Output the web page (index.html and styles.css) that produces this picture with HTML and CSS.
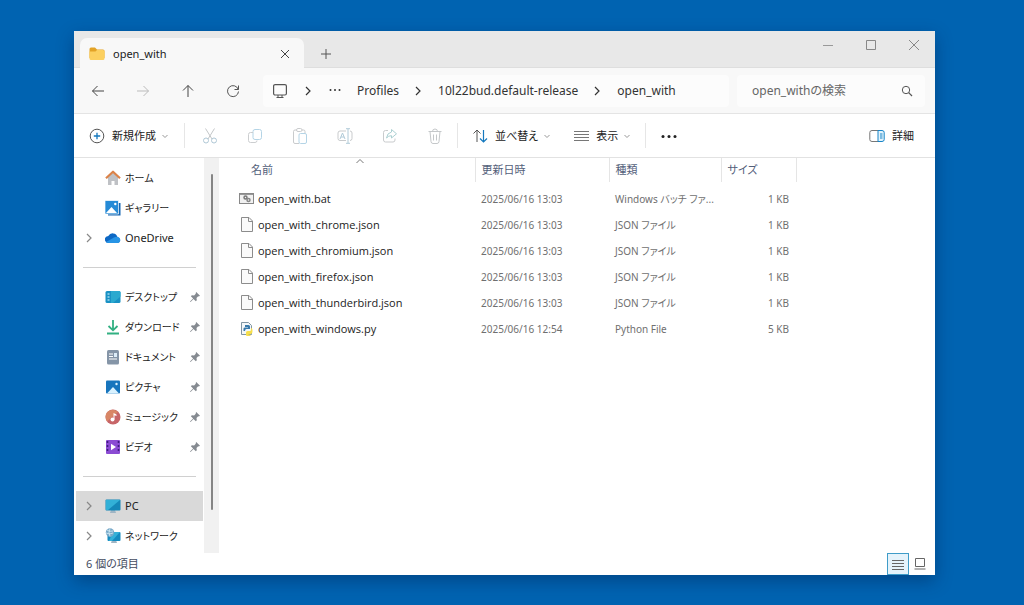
FILE: index.html
```html
<!DOCTYPE html>
<html lang="ja">
<head>
<meta charset="utf-8">
<title>open_with</title>
<link rel="stylesheet" href="styles.css">
</head>
<body>
<svg class="defs" aria-hidden="true">
  <symbol id="chev" viewBox="0 0 10 10"><path d="M3 1l4 4-4 4" fill="none" stroke="currentColor" stroke-width="1.2"/></symbol>
  <symbol id="down" viewBox="0 0 8 8"><path d="M1.500 3L4 5.500 6.500 3" fill="none" stroke="currentColor"/></symbol>
  <symbol id="pin" viewBox="0 0 12 12"><path d="M7.200 1l3.800 3.800-1.200.6-.6-.1-1.700 1.800.3 2.200-1 .9-2.300-2.300L1.600 11 1 10.400l3.100-2.900L1.900 5.200l.9-.9 2.300.2 1.700-1.700-.1-.7z" fill="#858a90"/></symbol>
  <symbol id="file" viewBox="0 0 16 16"><path d="M2.500 .5h7.500l3.500 3.500v10.500h-11z" fill="#fafafa" stroke="#8c8c8c"/><path d="M9.500 .5v4h4" fill="none" stroke="#8c8c8c"/></symbol>
</svg>
<main class="window">
  <header class="tabs">
    <div class="tab">
      <svg class="i16" viewBox="0 0 16 16"><path d="M.5 3q0-1.500 1.500-1.500h4l2 2h6q1.500 0 1.500 1.500v7H.5z" fill="#e3a326"/><path d="M.5 5.500h6l1.500-1.500h6q1.500 0 1.500 1.500v7q0 1.500-1.500 1.500H2q-1.500 0-1.500-1.500z" fill="#fcd060"/></svg>
      <span class="tab-title">open_with</span>
      <button class="plain" aria-label="タブを閉じる"><svg class="i10" viewBox="0 0 10 10"><path d="M1 1l8 8M9 1l-8 8" stroke="#444"/></svg></button>
    </div>
    <button class="plain new-tab" aria-label="新しいタブ"><svg class="i10" viewBox="0 0 10 10"><path d="M5 0v10M0 5h10" stroke="#555"/></svg></button>
    <div class="controls">
      <button class="plain" aria-label="最小化"><svg class="i10" viewBox="0 0 10 10"><path d="M0 5.500h10" stroke="#999"/></svg></button>
      <button class="plain" aria-label="最大化"><svg class="i10" viewBox="0 0 10 10"><path d="M.5 .5h9v9h-9z" fill="none" stroke="#888"/></svg></button>
      <button class="plain" aria-label="閉じる"><svg class="i10" viewBox="0 0 10 10"><path d="M0 0l10 10M10 0L0 10" stroke="#888"/></svg></button>
    </div>
  </header>

  <nav class="navbar">
    <div class="nav-buttons">
      <button class="plain" aria-label="戻る"><svg class="i14" viewBox="0 0 14 14"><path d="M13 7H1.500M6.500 2l-5 5 5 5" fill="none" stroke="#444"/></svg></button>
      <button class="plain" aria-label="進む"><svg class="i14" viewBox="0 0 14 14"><path d="M1 7h11.500M7.500 2l5 5-5 5" fill="none" stroke="#bbb"/></svg></button>
      <button class="plain" aria-label="上へ"><svg class="i14" viewBox="0 0 14 14"><path d="M7 13V1.500M2 6.500l5-5 5 5" fill="none" stroke="#444"/></svg></button>
      <button class="plain" aria-label="更新"><svg class="i14" viewBox="0 0 14 14"><path d="M12.200 5.300A5.500 5.500 0 1 0 12.500 7.500M12.500 1.500v4h-4" fill="none" stroke="#555"/></svg></button>
    </div>
    <div class="address">
      <svg class="i16" viewBox="0 0 16 16"><rect x="1.600" y="1.600" width="12.800" height="10.400" rx="1.500" fill="none" stroke="#555" stroke-width="1.200"/><path d="M4.500 14.500h7M6 12v2.500M10 12v2.500" fill="none" stroke="#555"/></svg>
      <svg class="i10 c1"><use href="#chev"/></svg>
      <button class="plain dots" aria-label="その他の場所"><svg class="i12" viewBox="0 0 12 12"><g fill="#333"><circle cx="1.500" cy="5" r="1"/><circle cx="6" cy="5" r="1"/><circle cx="10.500" cy="5" r="1"/></g></svg></button>
      <a href="#profiles">Profiles</a>
      <svg class="i10 c2"><use href="#chev"/></svg>
      <a href="#release">10l22bud.default-release</a>
      <svg class="i10 c2"><use href="#chev"/></svg>
      <a href="#open_with">open_with</a>
    </div>
    <div class="search">
      <input type="text" aria-label="検索" placeholder="open_withの検索">
      <svg class="i12" viewBox="0 0 12 12"><circle cx="5" cy="5" r="3.700" fill="none" stroke="#555"/><path d="M7.700 7.700L11 11" stroke="#555" stroke-width="1.200"/></svg>
    </div>
  </nav>

  <div class="toolbar">
    <button class="plain create"><svg class="i16" viewBox="0 0 16 16"><circle cx="8" cy="8" r="6.800" fill="none" stroke="#555"/><path d="M8 4.800v6.400M4.800 8h6.400" stroke="#1478be" stroke-width="1.300"/></svg><span>新規作成</span><svg class="i8"><use href="#down"/></svg></button>
    <div class="edit">
      <button class="plain" disabled aria-label="切り取り"><svg class="i16" viewBox="0 0 16 16"><path d="M3.500 .5l6.500 10.500M12.500 .5L6 11" stroke="#c3c6c8" fill="none"/><circle cx="4" cy="12.500" r="2.500" fill="none" stroke="#b0c8d6"/><circle cx="12" cy="12.500" r="2.500" fill="none" stroke="#b0c8d6"/></svg></button>
      <button class="plain" disabled aria-label="コピー"><svg class="i16" viewBox="0 0 16 16"><rect x="6" y="1.500" width="8.500" height="10" rx="2" fill="none" stroke="#b4d4e6"/><path d="M6 4.500H3.500q-2 0-2 2v6q0 2 2 2H8q2 0 2-2" fill="none" stroke="#ccced0"/></svg></button>
      <button class="plain" disabled aria-label="貼り付け"><svg class="i16" viewBox="0 0 16 16"><path d="M7 15.500H3q-1.500 0-1.500-1.500V3.500Q1.500 2 3 2h1.500M10 2h1.500Q13 2 13 3.500V5" fill="none" stroke="#c9cbcd"/><rect x="4.500" y=".5" width="5.500" height="3" rx="1.500" fill="none" stroke="#c9cbcd"/><rect x="7" y="5.500" width="7.500" height="10" rx="1.500" fill="none" stroke="#b4d4e6"/></svg></button>
      <button class="plain" disabled aria-label="名前の変更"><svg class="i16" viewBox="0 0 16 16"><path d="M9 3H3Q1 3 1 5v5.500q0 2 2 2h6M13 3q2 0 2 2v5.500q0 2-2 2" fill="none" stroke="#c9cbcd"/><path d="M3 11l2.500-6L8 11M4 9h3M11 1v14M9 .7h4M9 15.300h4" fill="none" stroke="#b0cad8"/></svg></button>
      <button class="plain" disabled aria-label="共有"><svg class="i16" viewBox="0 0 16 16"><path d="M6 2.500H3.500q-2 0-2 2V12q0 2 2 2H11q2 0 2-2v-1.500" fill="none" stroke="#c9cbcd"/><path d="M9.500 1.500l5 4.300-5 4.200V7.700Q6.500 7.500 4.500 10 5 5 9.500 4z" fill="none" stroke="#acd0d2"/></svg></button>
      <button class="plain" disabled aria-label="削除"><svg class="i16" viewBox="0 0 16 16"><path d="M1.500 3.500h13M5.500 3.500q0-2.500 2.500-2.500t2.500 2.500M3 3.500l1 10q.2 2 2 2h4q1.800 0 2-2l1-10M6.500 6.500v6M9.500 6.500v6" fill="none" stroke="#c5c8ca"/></svg></button>
    </div>
    <div class="arrange">
      <button class="plain"><svg class="i16" viewBox="0 0 16 16"><path d="M5 14V2M1.500 5.500L5 2l3.500 3.500" fill="none" stroke="#555"/><path d="M11.500 2v12M8 10.500l3.500 3.500 3.500-3.500" fill="none" stroke="#1478be" stroke-width="1.200"/></svg><span>並べ替え</span><svg class="i8"><use href="#down"/></svg></button>
      <button class="plain"><svg class="i16" viewBox="0 0 16 16"><path d="M1 3.500h15M1 6.500h15M1 9.500h15M1 12.500h15" stroke="#777"/></svg><span>表示</span><svg class="i8"><use href="#down"/></svg></button>
    </div>
    <button class="plain more" aria-label="もっと見る"><svg class="i16" viewBox="0 0 16 16"><g fill="#222"><circle cx="2" cy="8.500" r="1.500"/><circle cx="8" cy="8.500" r="1.500"/><circle cx="14" cy="8.500" r="1.500"/></g></svg></button>
    <button class="plain details"><svg class="i16" viewBox="0 0 16 16"><path d="M9 2.500H3q-2.200 0-2.200 2v7q0 2 2.200 2h6" fill="#fff" stroke="#777"/><path d="M9 2.500h4q2.200 0 2.200 2v7q0 2-2.200 2H9z" fill="#e2f3fc" stroke="#1684c7"/><path d="M11 6h2.500M11 8h2.500M11 10h2.500" stroke="#1684c7"/></svg><span>詳細</span></button>
  </div>

  <div class="content">
    <aside class="side">
      <ul>
        <li><a href="#home"><i></i><svg class="i16" viewBox="0 0 16 16"><path d="M3 7l5-4.500L13 7v8h-3.500v-4h-3v4H3z" fill="#bfc1c5"/><path d="M1 8.200L8 1.700l7 6.500" fill="none" stroke="#db8248" stroke-width="2.200" stroke-linejoin="round"/></svg><span>ホーム</span></a></li>
        <li><a href="#gallery"><i></i><svg class="i16" viewBox="0 0 16 16"><path d="M3 3h12.500v12.500H3z" fill="#1767b3"/><path d="M0 .5h13.500V14H0z" fill="#258ad6" stroke="#fff" stroke-width=".7"/><path d="M1 13l5.500-6 5.500 6z" fill="#fff"/><circle cx="10.300" cy="4" r="1.200" fill="#fff"/></svg><span>ギャラリー</span></a></li>
        <li><a href="#onedrive"><i><svg class="i10"><use href="#chev"/></svg></i><svg class="i16" viewBox="0 0 16 16"><path d="M3.500 13a3.500 3.500 0 0 1-.2-7A5 5 0 0 1 12.500 7 3.100 3.100 0 0 1 13 13z" fill="#0d68c4"/><path d="M4 13q-3 0-3-1l8-4.500q3-1.500 5.500.5a3.100 3.100 0 0 1-1.500 5z" fill="#2794e5"/></svg><span class="latin">OneDrive</span></a></li>
      </ul>
      <hr>
      <ul>
        <li><a href="#desktop"><i></i><svg class="i16" viewBox="0 0 16 16"><rect x=".5" y="2" width="15" height="12" rx="1.500" fill="#1991c4"/><path d="M6 2h8q1.500 0 1.500 1.500v4L8 14H6z" fill="#2ba9cf"/><path d="M2.500 5h2M2.500 8h2M2.500 11h2" stroke="#e2f9ff" stroke-width="1.200"/></svg><span>デスクトップ</span><svg class="i12 pin"><use href="#pin"/></svg></a></li>
        <li><a href="#downloads"><i></i><svg class="i16" viewBox="0 0 16 16"><path d="M8 1v10M3.500 7L8 11.300 12.500 7M2 14.500h12" fill="none" stroke="#32b082" stroke-width="1.800"/></svg><span>ダウンロード</span><svg class="i12 pin"><use href="#pin"/></svg></a></li>
        <li><a href="#documents"><i></i><svg class="i16" viewBox="0 0 16 16"><rect x="2" y="1" width="12" height="14.500" rx="1.500" fill="#8595a7"/><path d="M4 5h4M4 7.500h4M4 10h8" stroke="#fff"/><path d="M9 4h3v4H9z" fill="#dcecf8"/></svg><span>ドキュメント</span><svg class="i12 pin"><use href="#pin"/></svg></a></li>
        <li><a href="#pictures"><i></i><svg class="i16" viewBox="0 0 16 16"><rect x="1" y="1.500" width="14" height="13" rx="1" fill="#1775bd"/><path d="M2 14.500l6-6.500 6 6.500z" fill="#d9f2ff"/><circle cx="11.500" cy="5" r="1.200" fill="#d9f2ff"/></svg><span>ピクチャ</span><svg class="i12 pin"><use href="#pin"/></svg></a></li>
        <li><a href="#music"><i></i><svg class="i16" viewBox="0 0 16 16"><circle cx="8" cy="8" r="7.500" fill="#c76568"/><path d="M1 5a7.500 7.500 0 0 1 12-2L2 12.500Q-.2 9 1 5z" fill="#d88666"/><path d="M8.500 10V4l3 1.500v1.600l-2-.9v4.300" fill="#fff"/><circle cx="7.500" cy="10.500" r="2" fill="#fff"/></svg><span>ミュージック</span><svg class="i12 pin"><use href="#pin"/></svg></a></li>
        <li><a href="#videos"><i></i><svg class="i16" viewBox="0 0 16 16"><rect x="1" y="1" width="14" height="14" rx="1" fill="#8b4bd3"/><path d="M2.500 2v12M13.500 2v12" stroke="#3f1d80" stroke-width="1.600" stroke-dasharray="2 2"/><path d="M6 4.800l5 3.200-5 3.200z" fill="#fff"/></svg><span>ビデオ</span><svg class="i12 pin"><use href="#pin"/></svg></a></li>
      </ul>
      <hr>
      <ul>
        <li class="selected"><a href="#pc"><i><svg class="i10"><use href="#chev"/></svg></i><svg class="i16" viewBox="0 0 16 16"><path d="M6 12h4l1 3H5z" fill="#9fb5c4"/><rect x=".5" y="1.500" width="15" height="11" rx="1" fill="#1587b8"/><path d="M1 2h14L3 12H1z" fill="#32b0d7"/></svg><span class="latin">PC</span></a></li>
        <li><a href="#network"><i><svg class="i10"><use href="#chev"/></svg></i><svg class="i16" viewBox="0 0 16 16"><path d="M7 12h4l1 3H6z" fill="#9fb5c4"/><rect x="2.500" y="4" width="13" height="9" rx="1" fill="#158bc0"/><path d="M8 4h7l-8 9H4z" fill="#35b0d7"/><circle cx="5" cy="4.500" r="4.200" fill="#79aac9"/><path d="M2 2q2 2 6 1M1 5q4 2 7 0M5 .5q-2 4 0 8" fill="none" stroke="#d7edf8" stroke-width=".8"/></svg><span>ネットワーク</span></a></li>
      </ul>
    </aside>
    <div class="gutter"><div class="thumb"></div></div>
    <section class="files">
      <svg class="i8 sort" viewBox="0 0 8 8"><path d="M.5 5L4 1.500 7.500 5" fill="none" stroke="#777"/></svg>
      <table>
        <colgroup><col class="w-name"><col class="w-date"><col class="w-type"><col class="w-size"><col></colgroup>
        <thead><tr><th>名前</th><th>更新日時</th><th>種類</th><th>サイズ</th><td></td></tr></thead>
        <tbody>
          <tr><td><div class="name"><svg class="i16" viewBox="0 0 16 16"><rect x=".5" y="2.500" width="14" height="10" fill="#f1f1f1" stroke="#888"/><path d="M1 3.500h13" stroke="#999"/><circle cx="6.500" cy="6.500" r="1.500" fill="none" stroke="#777" stroke-width="1.500"/><circle cx="9.500" cy="9" r="1.500" fill="none" stroke="#888" stroke-width="1.500"/></svg><span>open_with.bat</span></div></td><td>2025/06/16 13:03</td><td>Windows バッチ ファ...</td><td>1 KB</td><td></td></tr>
          <tr><td><div class="name"><svg class="i16"><use href="#file"/></svg><span>open_with_chrome.json</span></div></td><td>2025/06/16 13:03</td><td>JSON ファイル</td><td>1 KB</td><td></td></tr>
          <tr><td><div class="name"><svg class="i16"><use href="#file"/></svg><span>open_with_chromium.json</span></div></td><td>2025/06/16 13:03</td><td>JSON ファイル</td><td>1 KB</td><td></td></tr>
          <tr><td><div class="name"><svg class="i16"><use href="#file"/></svg><span>open_with_firefox.json</span></div></td><td>2025/06/16 13:03</td><td>JSON ファイル</td><td>1 KB</td><td></td></tr>
          <tr><td><div class="name"><svg class="i16"><use href="#file"/></svg><span>open_with_thunderbird.json</span></div></td><td>2025/06/16 13:03</td><td>JSON ファイル</td><td>1 KB</td><td></td></tr>
          <tr><td><div class="name"><svg class="i16" viewBox="0 0 16 16"><path d="M2.500 1.500h7l3 3v9h-10z" fill="#f4f7f9" stroke="#8195a3"/><path d="M6 4h3.500q1.500 0 1.500 1.500V8H7.500Q6 8 6 10H4.500V7.500Q4.500 6.500 6 6.500h3V6H6z" fill="#3779ab"/><path d="M12 7q1.500 0 1.500 3t-2 3H9.500v.5h2v1.500H8q-1 0-1-1.500v-2Q7 10 8.500 10H11q1 0 1-1.500z" fill="#f7df4c"/></svg><span>open_with_windows.py</span></div></td><td>2025/06/16 12:54</td><td>Python File</td><td>5 KB</td><td></td></tr>
        </tbody>
      </table>
    </section>
  </div>

  <footer class="status">
    <span>6 個の項目</span>
    <div class="views">
      <button class="plain active" aria-label="詳細表示"><svg class="i12" viewBox="0 0 12 12"><path d="M0 2.500h12M0 5.500h12M0 8.500h12M0 11.500h12" stroke="#666"/></svg></button>
      <button class="plain" aria-label="大アイコン表示"><svg class="i12" viewBox="0 0 12 12"><path d="M1.500 .5h9v8h-9zM.5 11h11" fill="none" stroke="#666"/></svg></button>
    </div>
  </footer>
</main>
</body>
</html>
```
FILE: styles.css
```css
* { box-sizing: border-box; }
body {
  margin: 0;
  min-height: 100vh;
  padding: 31px 89px 30px 74px;
  display: flex;
  background: #0063b1;
  color: #222;
  font: 11px/16px "Noto Sans", "Noto Sans CJK JP", sans-serif;
  font-feature-settings: "palt";
}
.defs { display: none; }
svg { flex: none; display: block; }
.i8 { width: 8px; height: 8px; }
.i10 { width: 10px; height: 10px; }
.i12 { width: 12px; height: 12px; }
.i14 { width: 14px; height: 14px; }
.i16 { width: 16px; height: 16px; }
a { color: inherit; text-decoration: none; }
.plain {
  display: flex;
  align-items: center;
  justify-content: center;
  padding: 0;
  border: 0;
  background: none;
  color: inherit;
  font: inherit;
  font-feature-settings: inherit;
}
.window {
  flex: 1;
  min-width: 0;
  display: flex;
  flex-direction: column;
  background: #fff;
  box-shadow: 0 6px 16px rgba(0, 20, 60, .35);
}
.tabs { display: flex; height: 37px; background: #e8e8e8; border-bottom: 1px solid #dedede; }
.tab {
  display: flex;
  align-items: center;
  gap: 8px;
  width: 224px;
  height: 30px;
  margin: 7px 0 0 6px;
  padding: 1px 9px 0 9px;
  border-radius: 7px 7px 0 0;
  background: #f8f8f8;
}
.tab-title { flex: 1; }
.tab .plain { width: 20px; height: 20px; }
.new-tab { width: 43px; padding-top: 9px; }
.controls { display: flex; margin-left: auto; height: 28px; }
.controls .plain { width: 43px; }
.navbar {
  display: flex;
  align-items: center;
  gap: 8px;
  height: 46px;
  padding-right: 10px;
  background: #f8f8f8;
  border-bottom: 1px solid #e4e4e4;
}
.nav-buttons { display: flex; width: 181px; padding-left: 2px; }
.nav-buttons .plain { width: 45px; height: 32px; }
.address, .search { display: flex; align-items: center; height: 32px; border-radius: 4px; background: #fcfcfc; font-size: 12px; }
.address { flex: 1; padding-left: 9px; color: #333; }
.c1 { margin: 0 16px 0 15px; }
.c2 { margin: 0 15px 0 14px; }
.dots { margin-right: 16px; }
.search { width: 188px; padding: 0 12px 0 15px; }
.search input { flex: 1; min-width: 0; border: 0; padding: 0; outline: 0; background: none; font: inherit; font-feature-settings: inherit; }
.search input::placeholder { color: #666; opacity: 1; }
.toolbar { display: flex; align-items: center; height: 44px; padding: 0 21px 0 15px; border-bottom: 1px solid #e2e2e2; }
.toolbar span { margin: 0 5px 0 7px; }
.toolbar .i8 { color: #999; }
.create { width: 96px; height: 25px; justify-content: flex-start; border-right: 1px solid #e6e6e6; }
.edit { display: flex; width: 273px; height: 25px; padding-left: 2px; border-right: 1px solid #e6e6e6; }
.edit .plain { width: 45px; }
.arrange { display: flex; gap: 22px; width: 188px; height: 25px; padding-left: 14px; border-right: 1px solid #e6e6e6; }
.more { margin-left: 15px; }
.details { margin-left: auto; }
.details span { margin-right: 0; }
.content { flex: 1; display: flex; }
.side { width: 130px; padding: 5px 1px 0 2px; font-size: 10px; }
.side ul { margin: 0; padding: 0; list-style: none; }
.side a { display: flex; align-items: center; height: 30px; padding-right: 2px; }
.side i { width: 29px; padding-left: 8px; color: #888; }
.side span { flex: 1; padding-left: 4px; white-space: nowrap; }
.side .latin { font-size: 11px; }
.side hr { margin: 14px 7px; border: 0; border-top: 1px solid #d0d0d0; }
.selected { background: #d9d9d9; }
.gutter { display: flex; justify-content: center; width: 15px; padding: 16px 0 43px; background: #f1f1f1; }
.thumb { width: 2px; border-radius: 1px; background: #858585; }
.files { flex: 1; position: relative; }
.sort { position: absolute; left: 137px; top: 0; }
table { width: 100%; table-layout: fixed; border-collapse: collapse; }
.w-name { width: 256px; }
.w-date { width: 134px; }
.w-type { width: 112px; }
.w-size { width: 75px; }
th { height: 24px; padding: 0 5px 0 6px; text-align: left; font-weight: 400; color: #53607a; border-right: 1px solid #e5e5e5; }
th:first-child { padding-left: 32px; }
tbody::before { content: ""; display: table-row; height: 4px; }
tbody td { height: 26px; padding: 0 7px 0 6px; color: #6f6f6f; font-size: 10px; white-space: nowrap; }
tbody td:nth-child(4) { text-align: right; }
tbody td:first-child { padding-left: 20px; color: #222; font-family: "Open Sans", "Noto Sans CJK JP", sans-serif; font-size: 11px; }
.name { display: flex; align-items: center; gap: 3px; }
.status { display: flex; justify-content: space-between; align-items: center; height: 22px; padding: 0 4px 0 12px; color: #444c60; }
.views { display: flex; }
.views .plain { width: 22px; height: 22px; }
.views .active { background: #e5f3fb; border: 1px solid #3f9cc8; }
```
